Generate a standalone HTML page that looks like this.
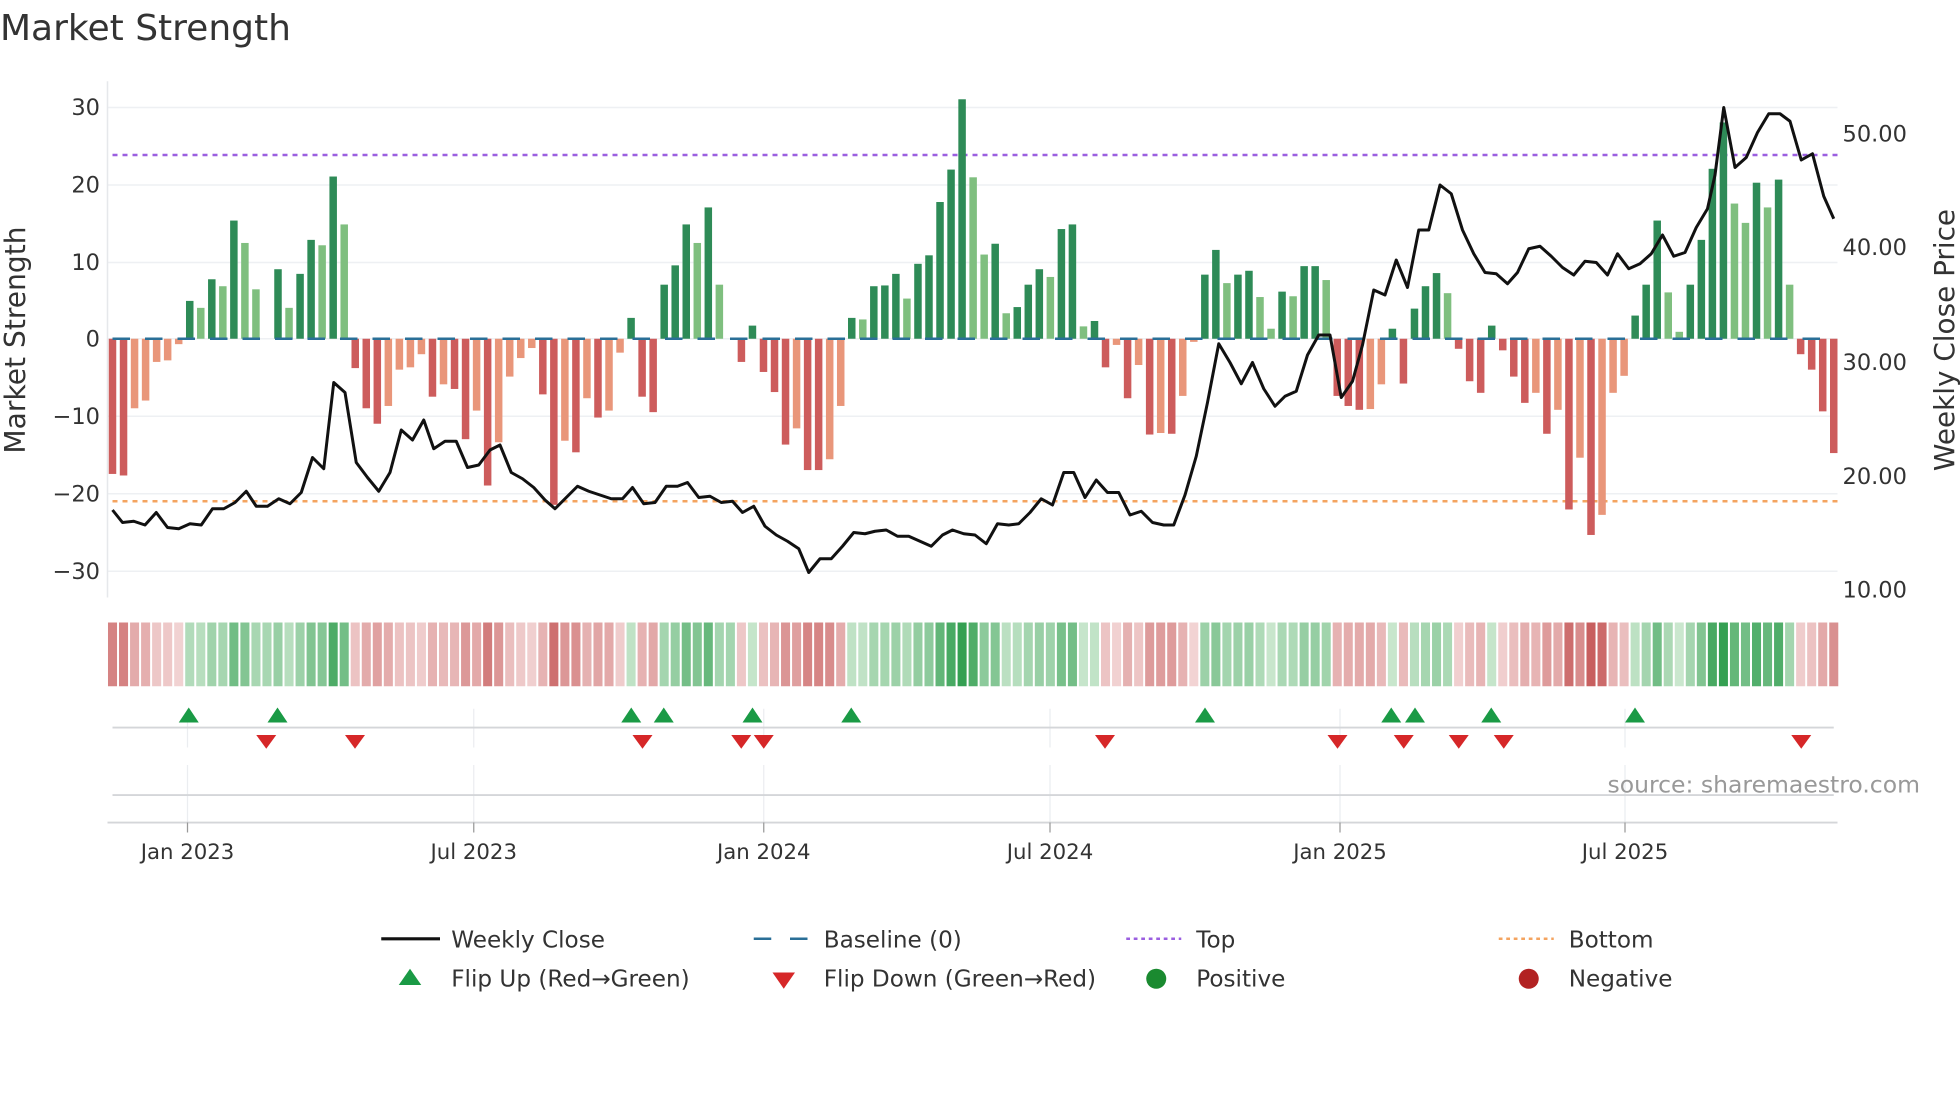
<!DOCTYPE html>
<html><head><meta charset="utf-8"><style>
html,body{margin:0;padding:0;background:#fff;}
svg{display:block;font-family:"DejaVu Sans","Liberation Sans",sans-serif;}
</style></head><body>
<svg id="s" width="1960" height="1102" viewBox="0 0 1568 881.6" xmlns="http://www.w3.org/2000/svg">
<rect width="1568" height="882" fill="#fff"/>
<text x="0" y="32" font-size="28.8" fill="#333">Market Strength</text>
<g stroke="#eef0f3" stroke-width="1.2">
<line x1="86" x2="1470" y1="86" y2="86"/><line x1="86" x2="1470" y1="148" y2="148"/><line x1="86" x2="1470" y1="210" y2="210"/><line x1="86" x2="1470" y1="271" y2="271"/><line x1="86" x2="1470" y1="333" y2="333"/><line x1="86" x2="1470" y1="395" y2="395"/><line x1="86" x2="1470" y1="457" y2="457"/>
</g>
<line x1="86" x2="86" y1="65" y2="478" stroke="#e6e8eb" stroke-width="1.2"/>
<g font-size="18" fill="#333" text-anchor="end">
<text x="80" y="92">30</text><text x="80" y="154">20</text><text x="80" y="216">10</text><text x="80" y="277">0</text><text x="80" y="339">−10</text><text x="80" y="401">−20</text><text x="80" y="463">−30</text>
</g>
<g font-size="18" fill="#333">
<text x="1474" y="113">50.00</text><text x="1474" y="204">40.00</text><text x="1474" y="296">30.00</text><text x="1474" y="387">20.00</text><text x="1474" y="478">10.00</text>
</g>
<text transform="translate(20,272) rotate(-90)" font-size="22.5" fill="#333" text-anchor="middle">Market Strength</text>
<text transform="translate(1563,272) rotate(-90)" font-size="22.3" fill="#333" text-anchor="middle">Weekly Close Price</text>
<line x1="90" x2="1470" y1="124" y2="124" stroke="#9b5fe0" stroke-width="2" stroke-dasharray="4,4"/>
<line x1="90" x2="1470" y1="401" y2="401" stroke="#f4a460" stroke-width="2" stroke-dasharray="4,4"/>
<g id="bars"></g>
<g id="strip"></g>
<path id="price" fill="none" stroke="#111" stroke-width="2.4" stroke-linejoin="round"/>
<g stroke="#ebedf0" stroke-width="1">
<line x1="150" x2="150" y1="567" y2="598"/><line x1="379" x2="379" y1="567" y2="598"/><line x1="611" x2="611" y1="567" y2="598"/><line x1="840" x2="840" y1="567" y2="598"/><line x1="1072" x2="1072" y1="567" y2="598"/><line x1="1300" x2="1300" y1="567" y2="598"/>
<line x1="150" x2="150" y1="612" y2="658"/><line x1="379" x2="379" y1="612" y2="658"/><line x1="611" x2="611" y1="612" y2="658"/><line x1="840" x2="840" y1="612" y2="658"/><line x1="1072" x2="1072" y1="612" y2="658"/><line x1="1300" x2="1300" y1="612" y2="658"/>
</g>
<line x1="90" x2="1467" y1="582" y2="582" stroke="#d4d6d9" stroke-width="1.5"/>
<line x1="90" x2="1467" y1="636" y2="636" stroke="#d4d6d9" stroke-width="1.5"/>
<line x1="86" x2="1470" y1="658" y2="658" stroke="#d4d6d9" stroke-width="1.5"/>
<g id="flips"></g>
<g stroke="#999" stroke-width="1">
<line x1="150" x2="150" y1="658" y2="666"/><line x1="379" x2="379" y1="658" y2="666"/><line x1="611" x2="611" y1="658" y2="666"/><line x1="840" x2="840" y1="658" y2="666"/><line x1="1072" x2="1072" y1="658" y2="666"/><line x1="1300" x2="1300" y1="658" y2="666"/>
</g>
<g font-size="17" fill="#333" text-anchor="middle">
<text x="150" y="687">Jan 2023</text><text x="379" y="687">Jul 2023</text><text x="611" y="687">Jan 2024</text><text x="840" y="687">Jul 2024</text><text x="1072" y="687">Jan 2025</text><text x="1300" y="687">Jul 2025</text>
</g>
<text x="1536" y="634" font-size="18.8" fill="#999" text-anchor="end">source: sharemaestro.com</text>
<g font-size="18.5" fill="#333">
<line x1="305" x2="352" y1="751" y2="751" stroke="#111" stroke-width="2.5"/><text x="361" y="758">Weekly Close</text>
<line x1="603" x2="617" y1="751" y2="751" stroke="#2a6f97" stroke-width="2"/><line x1="632" x2="646" y1="751" y2="751" stroke="#2a6f97" stroke-width="2"/><text x="659" y="758">Baseline (0)</text>
<line x1="901" x2="945" y1="751" y2="751" stroke="#9b5fe0" stroke-width="2" stroke-dasharray="3,3"/><text x="957" y="758">Top</text>
<line x1="1199" x2="1243" y1="751" y2="751" stroke="#f4a460" stroke-width="2" stroke-dasharray="3,3"/><text x="1255" y="758">Bottom</text>
<polygon points="319,788 337,788 328,775" fill="#1a9a45"/><text x="361" y="789">Flip Up (Red→Green)</text>
<polygon points="618,778 636,778 627,791" fill="#d62728"/><text x="659" y="789">Flip Down (Green→Red)</text>
<circle cx="925" cy="783" r="8" fill="#1a8a30"/><text x="957" y="789">Positive</text>
<circle cx="1223" cy="783" r="8" fill="#b22222"/><text x="1255" y="789">Negative</text>
</g>
</svg>
<script>
(function(){
var NS="http://www.w3.org/2000/svg";
var D="-17.5d,-17.7d,-9l,-8l,-3l,-2.8l,-0.7l,4.9d,4l,7.7d,6.8l,15.3d,12.4l,6.4l,0,9d,4l,8.4d,12.8d,12.1l,21d,14.8l,-3.8d,-9d,-11d,-8.7l,-4l,-3.7l,-2l,-7.5d,-5.9l,-6.5d,-13d,-9.3l,-19d,-13.4l,-4.9l,-2.5l,-1.2l,-7.2d,-21.5d,-13.2l,-14.7d,-7.7l,-10.2d,-9.3l,-1.8l,2.7d,-7.5d,-9.5d,7d,9.5d,14.8d,12.4l,17d,7l,0,-3d,1.7d,-4.3d,-6.9d,-13.7d,-11.6l,-17d,-17d,-15.6l,-8.7l,2.7d,2.5l,6.8d,6.9d,8.4d,5.2l,9.7d,10.8d,17.7d,21.9d,31d,20.9l,10.9l,12.3d,3.3l,4.1d,7d,9d,8l,14.2d,14.8d,1.6l,2.3d,-3.7d,-0.8l,-7.7d,-3.4l,-12.4d,-12.2l,-12.3d,-7.4l,-0.4l,8.3d,11.5d,7.2l,8.3d,8.8d,5.4l,1.3l,6.1d,5.5l,9.4d,9.4d,7.6l,-7.4d,-8.7d,-9.2d,-9.1l,-5.9l,1.3d,-5.8d,3.9d,6.8d,8.5d,5.9l,-1.3d,-5.5d,-7d,1.7d,-1.5d,-4.9d,-8.3d,-7l,-12.3d,-9.2l,-22.1d,-15.4l,-25.4d,-22.8l,-7l,-4.8l,3d,7d,15.3d,6l,0.9l,7d,12.8d,22d,28d,17.5l,15l,20.2d,17l,20.6d,7l,-2d,-4d,-9.4d,-14.8d".split(",");
var bars=document.getElementById("bars"),strip=document.getElementById("strip");
var n=D.length,step=(1467-90)/(n-1),Z=271,U=6.18;
function el(t,a,p){var e=document.createElementNS(NS,t);for(var k in a)e.setAttribute(k,a[k]);p.appendChild(e);return e;}
function mix(a,b,t){return "rgb("+[0,1,2].map(function(i){return Math.round(a[i]+(b[i]-a[i])*t)}).join(",")+")";}
var prev=0;
for(var i=0;i<n;i++){
 var s=D[i],v=parseFloat(s),light=s.indexOf("l")>=0,x=90+i*step;
 if(v!==0){
  var c=v>0?(light?"#7fbf7f":"#2e8b57"):(light?"#e9967a":"#cd5c5c");
  var h=Math.abs(v)*U;
  el("rect",{x:(x-3).toFixed(2),y:(v>0?Z-h:Z).toFixed(2),width:6,height:h.toFixed(2),fill:c},bars);
 }
 var vv=v!==0?v:prev; prev=vv;
 var t=Math.min(1,0.1+Math.abs(vv)/28);
 var col=vv>=0?mix([225,242,225],[52,160,82],t):mix([247,226,226],[200,95,95],t);
 el("rect",{x:(x-step/2+0.8).toFixed(2),y:498,width:(step-1.6).toFixed(2),height:51,fill:col},strip);
}
el("line",{x1:90,x2:1467,y1:Z,y2:Z,stroke:"#2a6f97","stroke-width":2,"stroke-dasharray":"14,12"},bars);
var P=[[90,408],[98,418],[107,417],[116,420],[125,410],[134,422],[143,423],[152,419],[161,420],[170,407],[179,407],[188,402],[197,393],[205,405],[214,405],[223,399],[232,403],[241,394],[250,366],[259,375],[267,306],[276,314],[285,370],[294,382],[303,393],[312,378],[321,344],[330,352],[339,336],[347,359],[356,353],[365,353],[374,374],[383,372],[392,360],[400,356],[409,378],[418,383],[427,390],[436,400],[444,407],[453,398],[462,389],[471,393],[480,396],[489,399],[498,399],[506,390],[515,403],[524,402],[533,389],[542,389],[550,386],[559,398],[568,397],[577,402],[586,401],[594,410],[603,405],[612,421],[621,428],[630,433],[639,439],[647,458],[656,447],[665,447],[674,437],[683,426],[692,427],[700,425],[709,424],[718,429],[727,429],[736,433],[745,437],[754,428],[762,424],[771,427],[780,428],[789,435],[798,419],[807,420],[815,419],[824,410],[833,399],[842,404],[851,378],[859,378],[868,398],[877,384],[886,394],[895,394],[904,412],[913,409],[922,418],[931,420],[939,420],[948,396],[957,365],[966,322],[975,275],[984,290],[993,307],[1002,290],[1011,311],[1020,325],[1028,317],[1037,313],[1046,284],[1055,268],[1064,268],[1073,318],[1082,305],[1090,276],[1099,232],[1108,236],[1117,208],[1126,230],[1135,184],[1143,184],[1152,148],[1161,155],[1170,184],[1179,203],[1188,218],[1197,219],[1206,227],[1214,218],[1223,199],[1232,197],[1241,205],[1250,214],[1259,220],[1268,209],[1277,210],[1286,220],[1294,203],[1303,215],[1312,211],[1321,203],[1330,188],[1339,205],[1348,202],[1357,182],[1366,167],[1372,140],[1379,86],[1388,134],[1397,126],[1406,106],[1415,91],[1424,91],[1432,97],[1441,128],[1450,123],[1459,157],[1467,175]];
document.getElementById("price").setAttribute("d","M"+P.map(function(p){return p[0]+","+p[1]}).join("L"));
var f=document.getElementById("flips");
[151,222,505,531,602,681,964,1113,1132,1193,1308].forEach(function(x){el("polygon",{points:(x-8)+",578 "+(x+8)+",578 "+x+",566",fill:"#1a9a45"},f);});
[213,284,514,593,611,884,1070,1123,1167,1203,1441].forEach(function(x){el("polygon",{points:(x-8)+",588 "+(x+8)+",588 "+x+",599",fill:"#d62728"},f);});
})();
</script>
</body></html>
